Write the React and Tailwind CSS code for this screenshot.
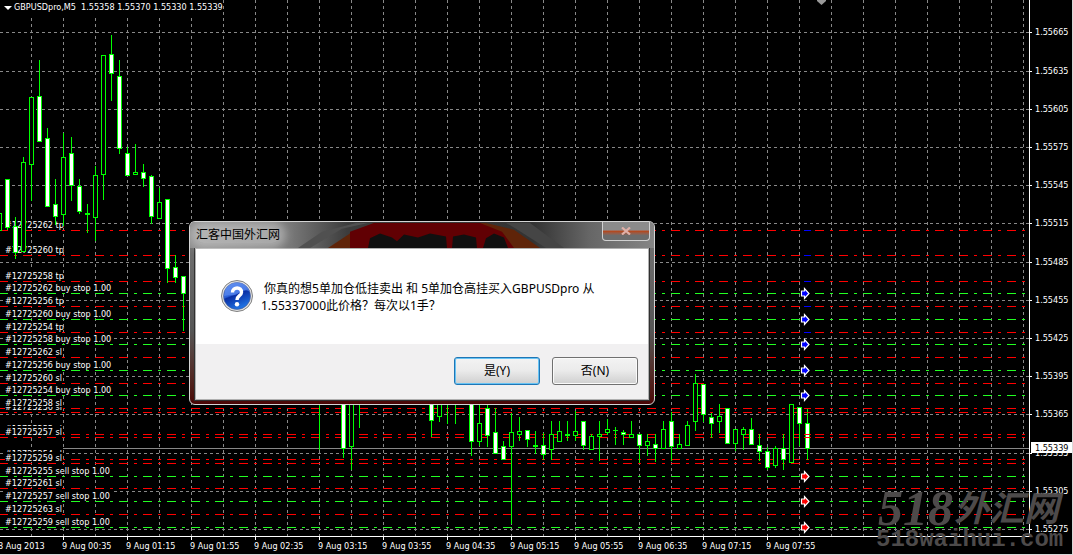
const GRID_X = Array.from({ length: 32 }, (_, i) => 31 + i * 32);

const PRICES = [
  [32, "1.55665"], [71, "1.55635"], [109, "1.55605"], [147, "1.55575"], [185, "1.55545"], [223, "1.55515"], [262, "1.55485"],
  [300, "1.55455"], [338, "1.55425"], [376, "1.55395"], [414, "1.55365"], [453, "1.55335"], [491, "1.55305"], [529, "1.55275"],
];

const TIMES = [
  "9 Aug 00:35", "9 Aug 01:15", "9 Aug 01:55", "9 Aug 02:35", "9 Aug 03:15", "9 Aug 03:55",
  "9 Aug 04:35", "9 Aug 05:15", "9 Aug 05:55", "9 Aug 06:35", "9 Aug 07:15", "9 Aug 07:55",
];

const RED_LINES = [230, 255, 281, 306, 332, 357, 383, 408, 412, 434, 437, 459, 463, 488, 514];
const GREEN_LINES = [293, 319, 344, 370, 395, 476, 501, 527];

const ORDERS = [
  [230, "#12725262 tp"], [255, "#12725260 tp"], [281, "#12725258 tp"], [293, "#12725262 buy stop 1.00"],
  [306, "#12725256 tp"], [319, "#12725260 buy stop 1.00"], [332, "#12725254 tp"], [344, "#12725258 buy stop 1.00"],
  [357, "#12725262 sl"], [370, "#12725256 buy stop 1.00"], [383, "#12725260 sl"], [395, "#12725254 buy stop 1.00"],
  [412, "#12725256 sl"], [408, "#12725258 sl"], [434, "#12725255 sl"], [437, "#12725257 sl"],
  [459, "#12725254 sl"], [463, "#12725259 sl"], [476, "#12725255 sell stop 1.00"], [488, "#12725261 sl"],
  [501, "#12725257 sell stop 1.00"], [514, "#12725263 sl"], [527, "#12725259 sell stop 1.00"],
];

// x, high, body top, body bottom, low, filled
const CANDLES = [
  [-1, 213, 213, 230, 230, 0], [7, 179, 179, 227, 229, 1], [15, 217, 226, 252, 258, 1], [23, 157, 162, 251, 251, 0],
  [31, 97, 97, 164, 200, 0], [39, 60, 96, 141, 141, 1], [47, 128, 138, 206, 206, 1], [55, 179, 204, 216, 224, 1],
  [63, 133, 157, 214, 225, 0], [71, 137, 153, 185, 200, 1], [79, 179, 186, 211, 213, 1], [87, 204, 213, 214, 232, 0],
  [95, 166, 175, 217, 240, 0], [103, 55, 55, 174, 199, 0], [111, 35, 54, 73, 100, 1], [119, 60, 76, 148, 153, 1],
  [127, 147, 153, 175, 175, 1], [135, 144, 172, 174, 174, 0], [143, 164, 172, 178, 186, 1], [151, 175, 176, 216, 223, 1],
  [159, 188, 202, 218, 218, 0], [167, 199, 199, 268, 282, 1], [175, 255, 267, 277, 282, 1], [183, 276, 276, 293, 330, 1],
  [319, 380, 380, 390, 449, 0], [343, 380, 380, 448, 457, 1], [351, 380, 380, 446, 469, 0], [359, 380, 380, 390, 427, 0],
  [431, 380, 380, 420, 436, 1], [439, 380, 380, 416, 421, 0], [447, 380, 380, 390, 423, 0], [455, 380, 380, 390, 423, 0],
  [471, 380, 380, 441, 455, 1], [479, 380, 423, 441, 445, 0], [487, 400, 408, 435, 446, 1], [495, 408, 432, 453, 453, 1],
  [503, 441, 446, 459, 459, 1], [511, 413, 432, 446, 523, 0], [519, 417, 431, 434, 440, 0], [527, 430, 430, 439, 446, 1],
  [535, 431, 445, 446, 453, 0], [543, 433, 445, 454, 459, 1], [551, 421, 434, 449, 459, 0], [559, 421, 431, 441, 441, 0],
  [567, 421, 434, 435, 440, 0], [575, 411, 431, 435, 440, 0], [583, 421, 421, 445, 449, 1], [591, 434, 436, 449, 449, 0],
  [599, 421, 434, 436, 460, 0], [607, 419, 429, 432, 434, 0], [615, 427, 430, 430, 444, 0], [623, 430, 432, 434, 444, 1],
  [631, 421, 434, 437, 437, 0], [639, 434, 434, 445, 462, 1], [647, 434, 441, 445, 455, 0], [655, 434, 444, 448, 461, 1],
  [663, 421, 429, 448, 448, 0], [671, 412, 421, 446, 460, 1], [679, 434, 444, 448, 448, 0], [687, 421, 425, 445, 445, 0],
  [695, 374, 383, 421, 430, 0], [703, 384, 384, 414, 421, 1], [711, 413, 417, 423, 437, 1], [719, 404, 416, 421, 432, 0],
  [727, 408, 408, 443, 443, 1], [735, 429, 429, 443, 450, 0], [743, 427, 429, 434, 449, 0], [751, 418, 429, 444, 444, 1],
  [759, 434, 445, 451, 460, 1], [767, 447, 451, 467, 469, 1], [775, 446, 448, 465, 467, 0], [783, 434, 448, 459, 469, 1],
  [791, 404, 404, 462, 462, 0], [799, 407, 407, 423, 445, 1], [807, 408, 423, 448, 459, 1],
];

const Candle = ({ x, high, top, bottom, low, filled }) => (
  <g fill="#00ff00">
    <rect x={x} y={high} width="1" height={low - high + 1} />
    <rect x={x - 2} y={top} width="5" height={bottom - top + 1} />
    {bottom - top > 1 && <rect x={x - 1} y={top + 1} width="3" height={bottom - top - 1} fill={filled ? "#ffffff" : "#000000"} />}
  </g>
);

const OrderArrow = ({ y, color }) => (
  <path d={`M801.5 ${y - 2}h3v-2.500l4.500 5l-4.500 5v-2.500h-3z`} fill={color} stroke="#ffffff" strokeWidth="1.200" />
);

const Chart = () => (
  <svg
    viewBox="0 0 1073 555"
    role="img"
    aria-label="GBPUSDpro M5"
    className="block w-full font-['DejaVu_Sans_Condensed','Noto_Sans',sans-serif] text-[9px]"
    shapeRendering="crispEdges"
  >
    <g stroke="#888888" strokeDasharray="3 3">
      {GRID_X.map((x) => <path key={x} d={`M${x + 0.5} 0V536`} />)}
      {PRICES.map(([y]) => <path key={y} d={`M0 ${y + 0.5}H1029`} />)}
    </g>
    <g strokeDasharray="9 6 3 6">
      {RED_LINES.map((y) => <path key={y} d={`M-1 ${y + 0.5}H1026`} stroke="#ff0000" />)}
      {GREEN_LINES.map((y) => <path key={y} d={`M-1 ${y + 0.5}H1026`} stroke="#22ff22" />)}
    </g>
    <path d="M62 448.5H1029" stroke="#888888" />

    {ORDERS.map(([y, label]) => (
      <g key={label + y}>
        <rect x="5" y={y - 11} width={label.length > 14 ? 108 : 58} height="10" />
        <text x="5" y={y - 2} fill="#ffffff">{label}</text>
      </g>
    ))}

    {CANDLES.map(([x, high, top, bottom, low, filled]) => (
      <Candle key={x} x={x} high={high} top={top} bottom={bottom} low={low} filled={filled} />
    ))}

    {[230, 255, 281, 306, 332].map((y) => <rect key={y} x="804" y={y} width="7" height="1" fill="#0000ff" />)}
    {[357, 383, 408, 412, 434, 437].map((y) => <rect key={y} x="804" y={y} width="7" height="1" fill="#ff0000" />)}
    <g shapeRendering="auto">
      {[293, 319, 344, 370, 395].map((y) => <OrderArrow key={y} y={y} color="#0000ff" />)}
      {[476, 501, 527].map((y) => <OrderArrow key={y} y={y} color="#ff0000" />)}
      <path d="M817 0h9v1l-4.500 4l-4.500 -4z" fill="#999999" />
    </g>

    {/* axes */}
    <path d="M1029.500 0V537M0 536.500H1030" stroke="#ffffff" />
    {TIMES.map((t, i) => (
      <g key={t} fill="#ffffff">
        <rect x={63 + i * 64} y="536" width="1" height="4" />
        <text x={62 + i * 64} y="549">{t}</text>
      </g>
    ))}
    <text x="-2" y="549" fill="#ffffff">8 Aug 2013</text>
    {PRICES.map(([y, p]) => (
      <g key={p} fill="#ffffff">
        <rect x="1030" y={y} width="2" height="1" />
        <text x="1035" y={y + 3}>{p}</text>
      </g>
    ))}
    <rect x="1031" y="442" width="41" height="11" fill="#ffffff" />
    <text x="1035" y="451">1.55339</text>

    <g fill="#4d4a4a" shapeRendering="auto">
      <text x="878" y="525" className="font-['Liberation_Serif',serif] text-[50px] font-bold italic">518</text>
      <text x="954" y="521" className="font-['Noto_Sans_CJK_SC',sans-serif] text-[35px] font-bold italic">外汇网</text>
      <text x="876" y="546" className="font-['Liberation_Mono',monospace] text-[24px] font-bold">518waihui.com</text>
    </g>
    <path d="M1072.500 0V555M0 554.500H1073" stroke="#d8d8d8" />
  </svg>
);

const QuestionIcon = () => (
  <svg viewBox="0 0 32 32" className="size-8 shrink-0" aria-hidden="true">
    <defs>
      <linearGradient id="ball" x1="0" y1="0" x2="0.4" y2="1">
        <stop offset="0" stopColor="#6f9df0" />
        <stop offset="0.5" stopColor="#2a5fd8" />
        <stop offset="0.55" stopColor="#0a2fa4" />
        <stop offset="1" stopColor="#1f6fe0" />
      </linearGradient>
    </defs>
    <circle cx="16" cy="16" r="15.500" fill="#e4e4e4" stroke="#808080" />
    <circle cx="16" cy="16" r="13.500" fill="url(#ball)" stroke="#4a5c92" strokeWidth="0.600" />
    <path d="M3 16C8 14 12 17 18 13S26 10 29 12A13.500 13.500 0 0 0 4.500 9z" fill="#5f8df2" opacity="0.600" />
    <path d="M11.500 12.500C11.500 6.500 21 6.500 20.500 12.500C20.300 16 16 15.500 16 20" fill="none" stroke="#ffffff" strokeWidth="3.400" />
    <circle cx="16" cy="24.200" r="2.200" fill="#ffffff" />
  </svg>
);

// what shows through the glass of the title bar
const GlassArt = () => (
  <svg viewBox="0 0 464 27" preserveAspectRatio="none" className="absolute inset-0 size-full" aria-hidden="true">
    <defs>
      <linearGradient id="glass">
        <stop offset="0" stopColor="#8c8c8c" />
        <stop offset="0.220" stopColor="#777777" />
        <stop offset="0.340" stopColor="#3c3c3c" />
        <stop offset="0.740" stopColor="#333333" />
        <stop offset="0.860" stopColor="#666666" />
        <stop offset="1" stopColor="#858585" />
      </linearGradient>
    </defs>
    <rect width="464" height="27" fill="url(#glass)" />
    <path d="M138 27L160 12L184 1H296L324 8L350 27z" fill="#5f2409" />
    <path d="M160 27V10L184 1H290L312 10L324 27z" fill="#610003" />
    <path d="M178 27L180 17L190 12L202 16L207 20L214 13L228 16L240 12L256 15L257 27z" fill="#101010" />
    <path d="M262 27L263 15L274 13L286 16L287 27z" fill="#101010" />
    <path d="M293 27L296 17L304 12L314 16L318 27z" fill="#101010" />
    <path d="M120 27L152 7L178 1H166L132 10L108 27z" fill="#505050" />
    <path d="M326 7L356 27H374L340 1H316z" fill="#454545" />
  </svg>
);

const DialogButton = ({ children, primary }) => (
  <button
    type="button"
    className={`h-7 w-[86px] rounded-[3px] border bg-linear-to-b from-[#f3f3f3] from-0% via-[#ebebeb] via-48% to-[#cfcfcf] text-xs text-black ${
      primary ? "border-[#1f76b5] shadow-[inset_0_0_0_1px_#67c3f4]" : "border-[#707070] shadow-[inset_0_0_0_1px_#fafafa]"
    }`}
  >
    {children}
  </button>
);

const ConfirmDialog = () => (
  <section
    role="dialog"
    aria-labelledby="dialog-title"
    className="absolute top-[221px] left-[189px] w-[466px] overflow-hidden rounded-md border border-[#d4d4d4] bg-linear-to-b from-[#777777] via-[#555555] via-60% to-[#4a0505] px-[5px] pb-[4px] font-['Noto_Sans','Noto_Sans_CJK_SC',sans-serif]"
  >
    <div className="relative -mx-[5px] flex h-[26px] items-center justify-between pr-1 pl-1.5">
      <GlassArt />
      <h1 id="dialog-title" className="relative rounded-full bg-white/35 text-xs text-black shadow-[0_0_8px_6px_rgba(255,255,255,0.35)]">汇客中国外汇网</h1>
      <button
        type="button"
        aria-label="Close"
        className="relative flex h-[19px] w-12 items-center justify-center self-start rounded-b-[4px] border border-t-0 border-[#d0d0d0] bg-linear-to-b from-[#8b8b8b] from-45% via-[#b8430c] via-50% to-[#6c6c6c] to-75%"
      >
        <svg viewBox="0 0 10 8" className="h-2 w-2.5" aria-hidden="true">
          <path d="M1 0.500L9 7.500M9 0.500L1 7.500" stroke="#e0b0a8" strokeWidth="2.200" />
        </svg>
      </button>
    </div>
    <div className="border border-[#b0b0b0] bg-[#f1f0f1] outline outline-[#303030]">
      <div className="flex items-start gap-2 bg-white px-[25px] pt-[31px] pb-[30px]">
        <QuestionIcon />
        <p className="text-xs leading-[17px] whitespace-pre text-black">
          {" 你真的想5单加仓低挂卖出 和 5单加仓高挂买入GBPUSDpro 从\n1.55337000此价格？每次以1手？"}
        </p>
      </div>
      <div className="flex justify-end gap-3 px-2.5 pt-[13px] pb-3.5">
        <DialogButton primary>是(Y)</DialogButton>
        <DialogButton>否(N)</DialogButton>
      </div>
    </div>
  </section>
);

export default function App() {
  return (
    <main className="relative min-h-screen bg-black">
      <Chart />
      <header className="absolute top-0 left-0 flex h-4 items-center gap-0.5 bg-black pl-1 font-['DejaVu_Sans_Condensed','Noto_Sans',sans-serif] text-[9px] text-white">
        <svg viewBox="0 0 8 4" className="h-1 w-2" aria-hidden="true"><path d="M0 0h8L4 4z" fill="#ffffff" /></svg>
        <span className="whitespace-pre">GBPUSDpro,M5  1.55358 1.55370 1.55330 1.55339</span>
      </header>
      <ConfirmDialog />
    </main>
  );
}
